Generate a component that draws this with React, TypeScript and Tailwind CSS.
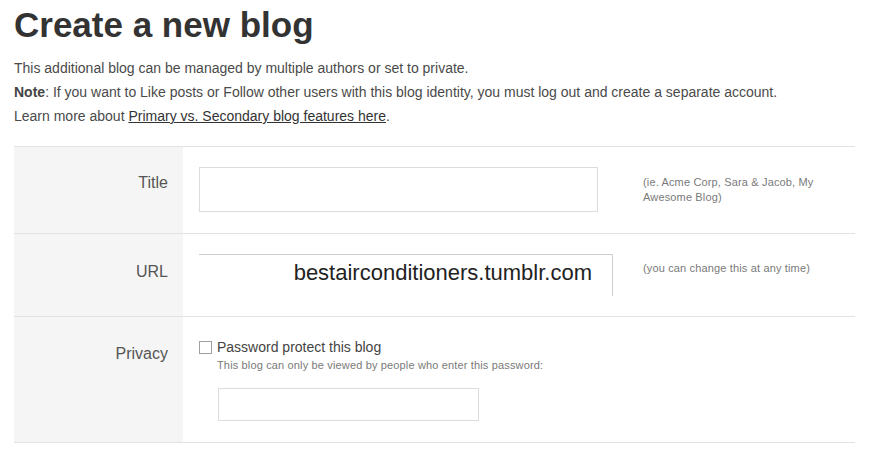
import React from "react";

function Label({ children, pt }: { children: React.ReactNode; pt: string }) {
  return (
    <div className={`bg-[#f5f5f5] pr-[15px] text-right text-[16px] leading-[20px] text-[#555] ${pt}`}>
      {children}
    </div>
  );
}

export default function App(): React.ReactElement {
  return (
    <div className="h-[459px] w-[872px] overflow-hidden bg-white font-['Liberation_Sans',Arial,sans-serif]">
      <div className="w-[855px] pl-[14px]">
        {/* Header */}
        <h1 className="pt-[5px] text-[35px] font-bold leading-[40px] text-[#333]">
          Create a new blog
        </h1>
        <div className="mt-[11px] text-[14px] leading-[24px] text-[#4a4a4a]">
          <p>This additional blog can be managed by multiple authors or set to private.</p>
          <p>
            <strong className="font-bold text-[#444]">Note</strong>: If you want to Like posts or
            Follow other users with this blog identity, you must log out and create a separate
            account.
          </p>
          <p>
            Learn more about{" "}
            <a href="#" className="text-[#333] underline">
              Primary vs. Secondary blog features here
            </a>
            .
          </p>
        </div>

        {/* Form table */}
        <div className="mt-[18px]">
          <div className="grid h-[87px] grid-cols-[169px_1fr] border-t border-[#e2e2e2]">
            <Label pt="pt-[26px]">Title</Label>
            <div className="flex pl-[16px] pt-[20px]">
              <div className="h-[45px] w-[399px] border border-[#dcdcdc] bg-white" />
              <p className="ml-[45px] w-[185px] pt-[8px] text-[11px] leading-[15px] tracking-[0.15px] text-[#7a7a7a]">
                (ie. Acme Corp, Sara &amp; Jacob, My Awesome Blog)
              </p>
            </div>
          </div>

          <div className="grid h-[83px] grid-cols-[169px_1fr] border-t border-[#e2e2e2]">
            <Label pt="pt-[28px]">URL</Label>
            <div className="flex pl-[16px] pt-[20px]">
              <div className="h-[42px] w-[414px] border-t border-r border-[#cfcfcf] pr-[20px] pt-[5px] text-right text-[22px] leading-[26px] text-[#222]">
                bestairconditioners.tumblr.com
              </div>
              <p className="ml-[30px] pt-[7px] text-[11px] leading-[15px] tracking-[0.15px] text-[#7a7a7a]">
                (you can change this at any time)
              </p>
            </div>
          </div>

          <div className="grid h-[127px] grid-cols-[169px_1fr] border-y border-[#e2e2e2]">
            <Label pt="pt-[27px]">Privacy</Label>
            <div className="pl-[16px] pt-[21px]">
              <label className="flex items-center text-[14px] leading-[18px] text-[#444]">
                <span className="mr-[5px] h-[13px] w-[13px] border border-[#a0a0a0] bg-white" />
                Password protect this blog
              </label>
              <p className="ml-[18px] mt-[2px] text-[11px] leading-[14px] tracking-[0.15px] text-[#7a7a7a]">
                This blog can only be viewed by people who enter this password:
              </p>
              <div className="ml-[19px] mt-[16px] h-[33px] w-[261px] border border-[#dcdcdc] bg-white" />
            </div>
          </div>
        </div>
      </div>
    </div>
  );
}
